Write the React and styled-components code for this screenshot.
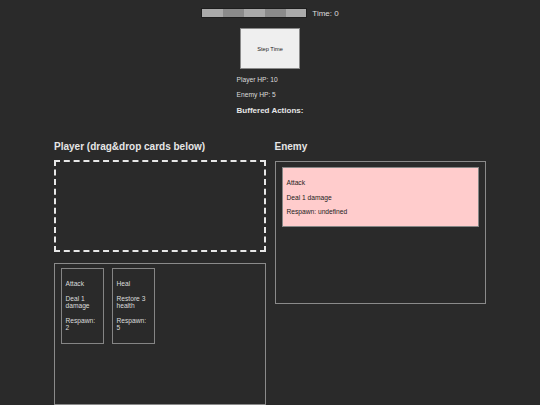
import styled, { createGlobalStyle } from 'styled-components';

const GlobalStyle = createGlobalStyle`
  html, body {
    margin: 0;
    padding: 0;
    background: #2a2a2a;
    overflow: hidden;
  }
  body {
    color: #dcdcdc;
    font-family: "Liberation Sans", Arial, sans-serif;
  }
`;

const Page = styled.div`
  padding-top: 8px;
`;

const TimeRow = styled.div`
  display: flex;
  justify-content: center;
  align-items: center;
  gap: 5px;
  height: 10px;
`;

const Timeline = styled.div`
  display: flex;
  width: 106px;
  height: 10px;
  box-sizing: border-box;
  border: 1px solid #1e1e1e;
`;

const Segment = styled.div`
  flex: 1;
  background: ${(p) => (p.$dark ? '#8b8b8b' : '#aaaaaa')};
`;

const TimeLabel = styled.span`
  font-size: 8px;
  line-height: 9px;
  color: #dcdcdc;
`;

const StepButton = styled.button`
  display: block;
  margin: 10px auto 0;
  width: 60px;
  height: 41px;
  padding: 0;
  background: #efefef;
  border: 1px solid #8a8a8a;
  color: #222;
  font-family: "Liberation Sans", Arial, sans-serif;
  font-size: 5.7px;
`;

const StatsWrap = styled.div`
  display: flex;
  justify-content: center;
`;

const Stats = styled.div`
  text-align: left;
`;

const Stat = styled.p`
  margin: 7px 0;
  font-size: 6.67px;
  line-height: 7.7px;
`;

const BufferedTitle = styled.h3`
  margin: 8px 0;
  font-size: 8px;
  line-height: 9.2px;
  font-weight: bold;
  color: #e6e6e6;
`;

const Columns = styled.div`
  display: grid;
  grid-template-columns: 1fr 1fr;
  column-gap: 9px;
  width: 432px;
  margin: 9px auto 0;
`;

const Column = styled.div`
  display: flex;
  flex-direction: column;
`;

const Heading = styled.h2`
  margin: 8.3px 0 8px;
  font-size: 10px;
  line-height: 11.5px;
  font-weight: bold;
  color: #e6e6e6;
`;

const DropZone = styled.div`
  box-sizing: border-box;
  height: 92px;
  margin-bottom: 11px;
  border: 2px dashed #e8e8e8;
`;

const Hand = styled.div`
  box-sizing: border-box;
  height: 142px;
  border: 1px solid #8a8a8a;
  padding: 4px 5.5px;
  display: flex;
  align-items: flex-start;
  gap: 8px;
`;

const EnemyBoard = styled.div`
  box-sizing: border-box;
  height: 143px;
  margin-top: 1px;
  border: 1px solid #8a8a8a;
  padding: 5px 6px;
`;

const Card = styled.div`
  box-sizing: border-box;
  width: ${(p) => (p.$enemy ? 'auto' : '43px')};
  padding: 4px;
  border: 1px solid #858585;
  background: ${(p) => (p.$enemy ? '#ffcccc' : 'transparent')};
  color: ${(p) => (p.$enemy ? '#222' : '#dcdcdc')};
`;

const CardLine = styled.p`
  margin: 6.8px 0;
  font-size: 6.67px;
  line-height: 7.6px;
`;

const handCards = [
  { name: 'Attack', text: 'Deal 1 damage', respawn: 2 },
  { name: 'Heal', text: 'Restore 3 health', respawn: 5 },
];

const enemyCards = [{ name: 'Attack', text: 'Deal 1 damage', respawn: 'undefined' }];

function CardView({ card, enemy }) {
  return (
    <Card $enemy={enemy}>
      <CardLine>{card.name}</CardLine>
      <CardLine>{card.text}</CardLine>
      <CardLine>Respawn: {card.respawn}</CardLine>
    </Card>
  );
}

export default function App() {
  return (
    <Page>
      <GlobalStyle />
      <TimeRow>
        <Timeline>
          {[0, 1, 2, 3, 4].map((i) => (
            <Segment key={i} $dark={i % 2 === 1} />
          ))}
        </Timeline>
        <TimeLabel>Time: 0</TimeLabel>
      </TimeRow>
      <StepButton type="button">Step Time</StepButton>
      <StatsWrap>
        <Stats>
          <Stat>Player HP: 10</Stat>
          <Stat>Enemy HP: 5</Stat>
          <BufferedTitle>Buffered Actions:</BufferedTitle>
        </Stats>
      </StatsWrap>
      <Columns>
        <Column>
          <Heading>Player (drag&amp;drop cards below)</Heading>
          <DropZone />
          <Hand>
            {handCards.map((c) => (
              <CardView key={c.name} card={c} />
            ))}
          </Hand>
        </Column>
        <Column>
          <Heading>Enemy</Heading>
          <EnemyBoard>
            {enemyCards.map((c, i) => (
              <CardView key={i} card={c} enemy />
            ))}
          </EnemyBoard>
        </Column>
      </Columns>
    </Page>
  );
}
